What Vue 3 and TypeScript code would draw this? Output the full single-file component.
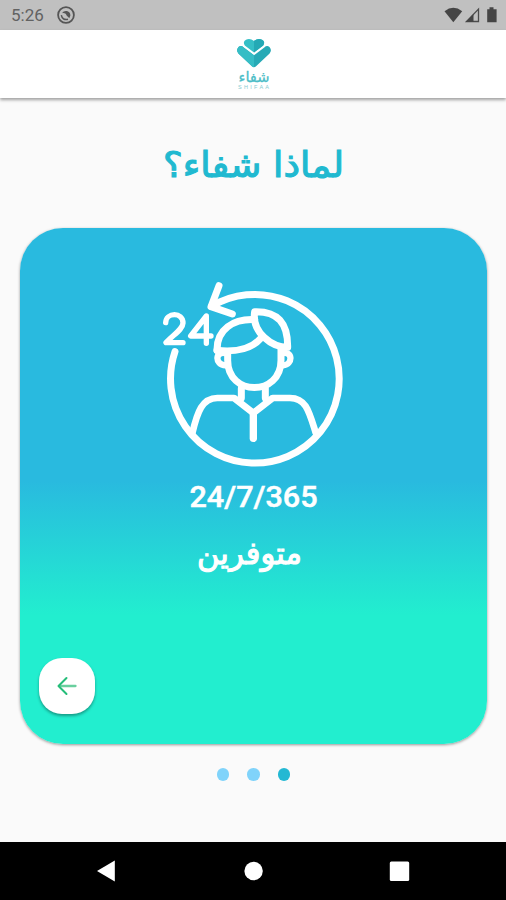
<script setup lang="ts">
import { ref } from 'vue'

const active = ref<number>(2)
const slides: number[] = [0, 1, 2]
</script>

<template>
  <div class="screen">
    <div class="status">
      <span class="time">5:26</span>
      <svg class="dnd" viewBox="0 0 20 20" width="20" height="20">
        <circle cx="10" cy="10" r="7.9" fill="none" stroke="#555" stroke-width="1.8" />
        <path d="M6.1 8.2C8 4.800 14.500 5.500 14.400 10.600L13.300 13.200L10.600 10.400C9.800 8.300 8 7.600 6.100 8.200Z" fill="#555" />
        <path d="M5.300 10.200C6 14 8.800 15.200 12 14.300" fill="none" stroke="#555" stroke-width="1.500" />
      </svg>
      <svg class="signals" viewBox="0 0 56 20" width="56" height="20">
        <path d="M0.500 6.200Q9.300-0.600 18.200 6.200L9.300 17.300Z" fill="#454545" />
        <path d="M34.500 4V16.500H22.500Z" fill="none" stroke="#4b4b4b" stroke-width="1.300" />
        <path d="M29.500 9V17H21.500Z" fill="#454545" />
        <path d="M45.500 2.300H49.500V4.200H52.600V17.200H43.200V4.200H45.500Z" fill="#454545" />
      </svg>
    </div>

    <header class="header">
      <svg viewBox="0 0 40 56" width="40" height="56">
        <path d="M20 14.500L10.800 7.500Q8.400 3.500 12 1.700Q16-0.200 20 3Q24-0.200 28 1.700Q31.600 3.500 29.200 7.500Z" fill="#35bfc6" />
        <path d="M20 14.500V3Q24-0.200 28 1.700Q31.600 3.500 29.200 7.500Z" fill="#24a9b5" />
        <path d="M4.500 9Q7 7 9.700 9.400L20 17.200L30.300 9.400Q33 7 35.500 9Q38.300 12.300 35.600 15.400L21.800 28.500Q20 30 18.200 28.500L4.400 15.400Q1.700 12.300 4.500 9Z" fill="#27aab6" />
        <path d="M20 17.200L9.700 9.400Q7 7 4.500 9Q1.700 12.300 4.400 15.400L18.200 28.500Q19 29.300 20 29.300Z" fill="#36bdc5" />
        <text class="logo-ar" x="20" y="43.500" text-anchor="middle" textLength="31" lengthAdjust="spacingAndGlyphs">شفاء</text>
        <text class="logo-en" x="4" y="50.500" textLength="31">SHIFAA</text>
      </svg>
    </header>

    <main class="content">
      <h1 class="title">
        <svg viewBox="0 0 190 60" width="190" height="60">
          <text class="title-text" x="95.500" y="38.500" text-anchor="middle" direction="rtl" textLength="181" lengthAdjust="spacingAndGlyphs">لماذا شفاء؟</text>
        </svg>
      </h1>

      <section class="card">
        <svg class="art" viewBox="0 0 630 600" width="210" height="200">
          <g fill="none" stroke="#fff" stroke-width="21" stroke-linecap="round" stroke-linejoin="round">
            <path d="M78 230A253 253 0 1 0 188 94" />
            <path d="M210 32L186 95L250 117" />
            <path d="M50 143C51 112 102 110 102 144C101 164 74 178 51 203H102" stroke-width="16" />
            <path d="M172 205V123L125 183H186" stroke-width="16" />
            <path d="M204 226C203 163 253 131 317 134" />
            <path d="M317 110C386 108 417 144 416 217C370 217 307 173 317 110Z" />
            <path d="M204 226C263 232 309 220 334 191" />
            <path d="M236 230V256C236 365 396 365 396 256V218" />
            <path d="M230 235C199 226 195 269 230 271M400 235C431 226 433 269 402 271" stroke-width="19" />
            <path d="M277 340V369M349 340V369" />
            <path d="M130 475C145 410 160 369 205 369H255L313 414L371 369H423C471 369 480 409 500 473" stroke-width="20" />
            <path d="M313 414V490" stroke-width="22" />
          </g>
        </svg>
        <svg class="captions" viewBox="0 0 150 110" width="150" height="110">
          <text class="caption-num" x="10.500" y="31.800" textLength="128" lengthAdjust="spacingAndGlyphs">24/7/365</text>
          <text class="caption-ar" x="70.500" y="89" text-anchor="middle" direction="rtl" textLength="105" lengthAdjust="spacingAndGlyphs">متوفرين</text>
        </svg>
        <button class="back" type="button">
          <svg viewBox="0 0 24 24" width="24" height="24" fill="none" stroke-linecap="round" stroke-linejoin="round">
            <path d="M5 12H20.500" stroke="#69cf9e" stroke-width="2.300" />
            <path d="M11.500 4L3.500 12L11.500 20" stroke="#25bd79" stroke-width="2" />
          </svg>
        </button>
      </section>

      <div class="dots">
        <span v-for="s in slides" :key="s" class="dot" :class="{ on: s === active }"></span>
      </div>
    </main>

    <nav class="nav">
      <svg viewBox="0 0 506 58" width="506" height="58" fill="#fff">
        <path d="M97 29L114.800 18.600V39.400Z" />
        <circle cx="253.600" cy="29" r="9.200" />
        <rect x="389.800" y="19.500" width="19.400" height="19.400" rx="1.500" />
      </svg>
    </nav>
  </div>
</template>

<style>
body {
  margin: 0;
  background: #fafafa;
}
</style>

<style scoped>
.screen {
  width: 506px;
  height: 900px;
  display: flex;
  flex-direction: column;
  background: #fafafa;
  overflow: hidden;
  font-family: Roboto, "DejaVu Sans", sans-serif;
}
.screen svg {
  display: block;
}
.status {
  height: 30px;
  flex: none;
  box-sizing: border-box;
  padding: 0 6px 0 11px;
  display: flex;
  align-items: center;
  background: #c0c0c0;
}
.time {
  width: 45px;
  font-size: 17px;
  line-height: 30px;
  color: #626262;
}
.dnd {
  margin-top: 0;
}
.signals {
  margin-left: auto;
}
.header {
  height: 68px;
  flex: none;
  box-sizing: border-box;
  padding: 8px 0 0 1px;
  display: flex;
  justify-content: center;
  background: #fff;
  box-shadow: 0 2px 3px rgba(0, 0, 0, 0.36);
}
.logo-ar {
  font: 15px "DejaVu Sans", sans-serif;
  fill: #4bbdc7;
  stroke: #4bbdc7;
  stroke-width: 0.3px;
}
.logo-en {
  font: 5.500px "Liberation Sans", sans-serif;
  fill: #87cbd0;
}
.content {
  flex: 1;
  display: flex;
  flex-direction: column;
  align-items: center;
}
.title {
  margin: 40px 0 30px;
  height: 60px;
}
.title-text {
  font: 35px "DejaVu Sans", sans-serif;
  fill: #20b9d0;
  stroke: #20b9d0;
  stroke-width: 1.1px;
}
.card {
  width: 467px;
  height: 516px;
  margin-left: 1px;
  box-sizing: border-box;
  padding-top: 47px;
  display: flex;
  flex-direction: column;
  align-items: center;
  border-radius: 43px;
  background: linear-gradient(#29badf 0%, #29badf 49%, #22eecf 75%, #22eecf 100%);
  box-shadow: 0 1px 3px rgba(0, 0, 0, 0.4);
}
.caption-num {
  font: 500 30px Roboto, sans-serif;
  fill: #fff;
  stroke: #fff;
  stroke-width: 0.5px;
}
.caption-ar {
  font: 31px "DejaVu Sans", sans-serif;
  fill: #fff;
  stroke: #fff;
  stroke-width: 1.1px;
}
.back {
  align-self: flex-start;
  width: 56px;
  height: 56px;
  margin: 73px 0 0 19px;
  padding: 0;
  border: 0;
  border-radius: 23px;
  display: flex;
  align-items: center;
  justify-content: center;
  background: #fff;
  box-shadow: 0 2px 3px rgba(0, 0, 0, 0.35);
}
.dots {
  display: flex;
  gap: 18px;
  margin-top: 24px;
  margin-left: 1px;
}
.dot {
  width: 12.500px;
  height: 12.500px;
  border-radius: 50%;
  background: #80d3fa;
}
.dot.on {
  background: #24b8d3;
}
.nav {
  height: 58px;
  flex: none;
  background: #000;
}
</style>
